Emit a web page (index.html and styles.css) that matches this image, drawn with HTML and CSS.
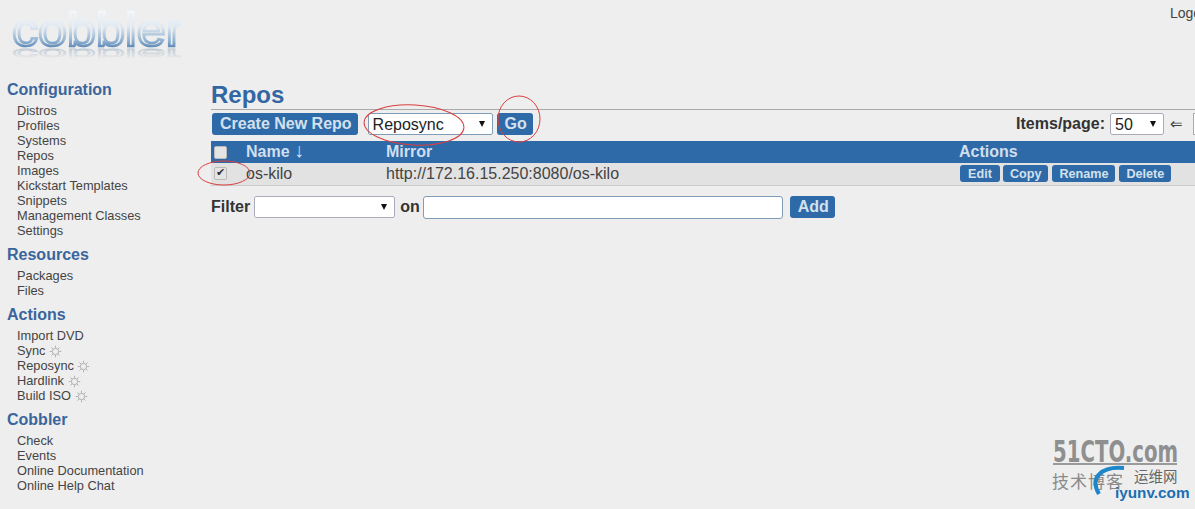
FILE: index.html
```html
<!DOCTYPE html>
<html lang="en">
<head>
<meta charset="utf-8">
<title>Cobbler - Repos</title>
<link rel="stylesheet" href="styles.css">
</head>
<body>
<svg class="defs" width="0" height="0" aria-hidden="true">
  <symbol id="sun" viewBox="0 0 14 14">
    <circle cx="7" cy="7" r="3.4"/>
    <path d="M7 .8V3M7 11v2.2M.8 7H3M11 7h2.2M2.6 2.6l1.6 1.6M9.8 9.8l1.6 1.6M2.6 11.4l1.6-1.6M9.8 4.2l1.6-1.6"/>
  </symbol>
</svg>
<header class="top">
  <svg class="logo" width="180" height="72" viewBox="0 0 180 72" role="img" aria-label="cobbler">
    <defs>
      <linearGradient id="lg" x1="0" y1="0" x2="0" y2="1">
        <stop offset="0" stop-color="#ffffff"/>
        <stop offset="0.45" stop-color="#dfe8f1"/>
        <stop offset="0.72" stop-color="#8fb0d0"/>
        <stop offset="0.95" stop-color="#2f639c"/>
      </linearGradient>
      <linearGradient id="rf" x1="0" y1="0" x2="0" y2="1">
        <stop offset="0.2" stop-color="#efefef"/>
        <stop offset="0.9" stop-color="#bcc7d2"/>
      </linearGradient>
    </defs>
    <text class="logo-text" x="11" y="46" textLength="171" lengthAdjust="spacingAndGlyphs" stroke="url(#lg)">cobbler</text>
    <text class="logo-text" transform="matrix(1 0 0 -0.33 0 49)" x="11" y="0" textLength="171" lengthAdjust="spacingAndGlyphs" stroke="url(#rf)">cobbler</text>
  </svg>
  <a class="logout" href="#">Logout</a>
</header>
<div class="page">
  <nav class="side">
    <h2>Configuration</h2>
    <ul>
      <li>Distros</li><li>Profiles</li><li>Systems</li><li>Repos</li><li>Images</li>
      <li>Kickstart Templates</li><li>Snippets</li><li>Management Classes</li><li>Settings</li>
    </ul>
    <h2>Resources</h2>
    <ul><li>Packages</li><li>Files</li></ul>
    <h2>Actions</h2>
    <ul>
      <li>Import DVD</li>
      <li>Sync <svg class="sun"><use href="#sun"/></svg></li>
      <li>Reposync <svg class="sun"><use href="#sun"/></svg></li>
      <li>Hardlink <svg class="sun"><use href="#sun"/></svg></li>
      <li>Build ISO <svg class="sun"><use href="#sun"/></svg></li>
    </ul>
    <h2>Cobbler</h2>
    <ul><li>Check</li><li>Events</li><li>Online Documentation</li><li>Online Help Chat</li></ul>
  </nav>
  <main class="main">
    <h1>Repos</h1>
    <div class="toolbar">
      <button class="btn btn-lg">Create New Repo</button>
      <div class="select sel-action"><select><option>Reposync</option></select></div>
      <button class="btn btn-lg">Go</button>
      <div class="pager">
        <b>Items/page:</b>
        <div class="select sel-items"><select><option>50</option></select></div>
        <span class="arrow">⇐</span>
        <span class="page-box"></span>
      </div>
    </div>
    <table class="grid">
      <thead>
        <tr>
          <th class="c-check"><input type="checkbox" class="cb"></th>
          <th class="c-name">Name <span class="sort">↓</span></th>
          <th class="c-mirror">Mirror</th>
          <th>Actions</th>
        </tr>
      </thead>
      <tbody>
        <tr>
          <td class="c-check"><input type="checkbox" class="cb" checked></td>
          <td>os-kilo</td>
          <td>http://172.16.15.250:8080/os-kilo</td>
          <td>
            <div class="actions">
              <button class="btn btn-sm">Edit</button>
              <button class="btn btn-sm">Copy</button>
              <button class="btn btn-sm">Rename</button>
              <button class="btn btn-sm">Delete</button>
            </div>
          </td>
        </tr>
      </tbody>
    </table>
    <div class="filter">
      <b>Filter</b>
      <div class="select sel-filter"><select><option></option></select></div>
      <b class="on">on</b>
      <input class="filter-input" type="text">
      <button class="btn btn-lg">Add</button>
    </div>
  </main>
</div>

<svg class="marks" width="1195" height="509" viewBox="0 0 1195 509" aria-hidden="true">
  <ellipse cx="414" cy="125" rx="50" ry="20" transform="rotate(3 414 125)"/>
  <ellipse cx="519" cy="119" rx="21" ry="23"/>
  <ellipse cx="224" cy="173" rx="26" ry="12"/>
</svg>

<div class="watermark">
  <svg width="155" height="79" viewBox="0 0 155 79">
    <text class="wm-51" x="13" y="32" textLength="125" lengthAdjust="spacingAndGlyphs">51CTO.com</text>
    <rect x="13" y="33" width="124" height="2" fill="#9a9a9a"/>
    <text class="wm-cn" x="12" y="58">技术博客</text>
    <text class="wm-yw" x="94" y="52">运维网</text>
    <path class="wm-arc" d="M59 64 C49 47 62 36 84 38"/>
    <text class="wm-iy" x="75" y="68">iyunv.com</text>
  </svg>
</div>
</body>
</html>
```
FILE: styles.css
```css
* { box-sizing: border-box; }
html, body { height: 100%; }
body {
  margin: 0;
  width: 1195px;
  height: 509px;
  overflow: hidden;
  position: relative;
  background: #eeeeee;
  color: #444;
  font-family: "Liberation Sans", Arial, sans-serif;
}
.defs { position: absolute; }
.top {
  height: 72px;
  display: flex;
  align-items: flex-start;
  width: 1240px;
}
.logo { margin-left: 1px; flex: none; }
.logo-text {
  font-family: "Liberation Sans", Arial, sans-serif;
  font-size: 47px;
  fill: none;
  stroke-width: 2.6;
}
.logout {
  margin-left: 989px;
  margin-top: 5px;
  font-size: 14px;
  line-height: 16px;
  color: #444;
  text-decoration: none;
  white-space: nowrap;
}
.page { display: flex; width: 1240px; }
.side { width: 211px; flex: none; padding: 8px 0 0 7px; }
.side h2 {
  margin: 0;
  height: 20px;
  font-size: 16px;
  line-height: 20px;
  color: #3a659c;
}
.side ul {
  list-style: none;
  margin: 3px 0 7px 10px;
  padding: 0;
  font-size: 12.8px;
  line-height: 15px;
  color: #444;
}
.sun {
  width: 13px;
  height: 13px;
  vertical-align: -3px;
  fill: none;
  stroke: #aaa;
  stroke-width: 1;
}
.main { flex: 1; min-width: 0; padding-top: 10px; }
h1 {
  margin: 0;
  height: 28px;
  font-size: 24px;
  line-height: 26px;
  color: #3267a3;
  border-bottom: 1px solid #aaa;
}
.btn {
  border: 0;
  border-radius: 3px;
  background: #2f6aa8;
  color: #d3e1ee;
  font-family: inherit;
  font-weight: bold;
  padding: 0;
}
.btn-lg { height: 22px; font-size: 16px; padding: 0 6px 0 8px; }
.btn-sm { height: 17px; min-width: 40px; font-size: 12.6px; padding: 0 7px; }
.toolbar {
  display: flex;
  align-items: center;
  height: 24px;
  margin-top: 2px;
  padding: 0 25px 0 1px;
}
.sel-action { margin: 0 4px 0 10px; width: 125px; }
.select { position: relative; height: 22px; background: #fff; flex: none; }
.select select {
  appearance: none;
  display: block;
  width: 100%;
  height: 100%;
  background: transparent;
  border: 1px solid #aab;
  border-radius: 2px;
  padding: 0 0 0 4px;
  font: 16px "Liberation Sans", Arial, sans-serif;
  color: #222;
}
.select::after {
  content: "";
  position: absolute;
  right: 8px;
  top: 8px;
  border: 3.5px solid transparent;
  border-top: 6px solid #111;
  border-bottom: 0;
  pointer-events: none;
}
.sel-action select { border-color: #7f9db9; }
.pager {
  margin-left: auto;
  display: flex;
  align-items: center;
  font-size: 16px;
  color: #333;
}
.sel-items { width: 54px; margin-left: 5px; }
.arrow { font-size: 15px; margin-left: 6px; width: 23px; color: #444; }
.page-box { display: block; width: 22px; height: 22px; background: #fff; border: 1px solid #aaa; }
.grid {
  width: 100%;
  margin-top: 5px;
  border-collapse: collapse;
  font-size: 16px;
  table-layout: fixed;
}
.grid th {
  height: 22px;
  padding: 0;
  background: #2f6aa8;
  color: #cfdfee;
  text-align: left;
  font-size: 16px;
}
.grid td {
  height: 22px;
  padding: 0;
  background: #e2e2e2;
  border-bottom: 1px solid #ccc;
  color: #444;
}
.c-check { width: 35px; }
.c-name { width: 140px; }
.c-mirror { width: 573px; }
.sort { font-weight: normal; font-size: 20px; line-height: 0; }
.cb {
  appearance: none;
  display: block;
  position: relative;
  width: 13px;
  height: 13px;
  margin: 0 0 0 3px;
  border: 1px solid #bbb;
  border-radius: 2px;
  background: #e4e4e4;
}
.cb:checked::after {
  content: "✔";
  position: absolute;
  left: 1px;
  top: -2px;
  font: 11px/14px "DejaVu Sans", sans-serif;
  color: #333;
}
.actions { display: flex; gap: 3px; align-items: center; padding-left: 1px; }
.actions .btn:nth-child(n+3) { margin-left: 1px; }
.filter {
  display: flex;
  align-items: center;
  margin-top: 10px;
  font-size: 16px;
  color: #333;
}
.sel-filter { width: 141px; margin-left: 4px; }
.on { margin-left: 5px; }
.filter-input {
  width: 360px;
  height: 23px;
  margin-left: 3px;
  border: 1px solid #7f9db9;
  border-radius: 3px;
  background: #fff;
}
.filter .btn { margin-left: 7px; }
.marks { position: absolute; left: 0; top: 0; pointer-events: none; }
.marks ellipse { fill: none; stroke: #d9403f; stroke-width: 1; }
.watermark { position: absolute; left: 1040px; top: 430px; width: 155px; height: 79px; }
.wm-51 {
  font-family: "DejaVu Sans", sans-serif;
  font-weight: bold;
  font-size: 30px;
  fill: #8f8f8f;
}
.wm-cn {
  font-family: "Noto Sans CJK SC", sans-serif;
  font-size: 17px;
  letter-spacing: 1px;
  fill: #8a8a8a;
}
.wm-yw {
  font-family: "Noto Sans CJK SC", sans-serif;
  font-size: 14.5px;
  fill: #666;
}
.wm-arc { fill: none; stroke: #1c86c8; stroke-width: 4; }
.wm-iy {
  font-family: "Liberation Sans", Arial, sans-serif;
  font-weight: bold;
  font-size: 15.3px;
  fill: #1b6fb3;
}
```
